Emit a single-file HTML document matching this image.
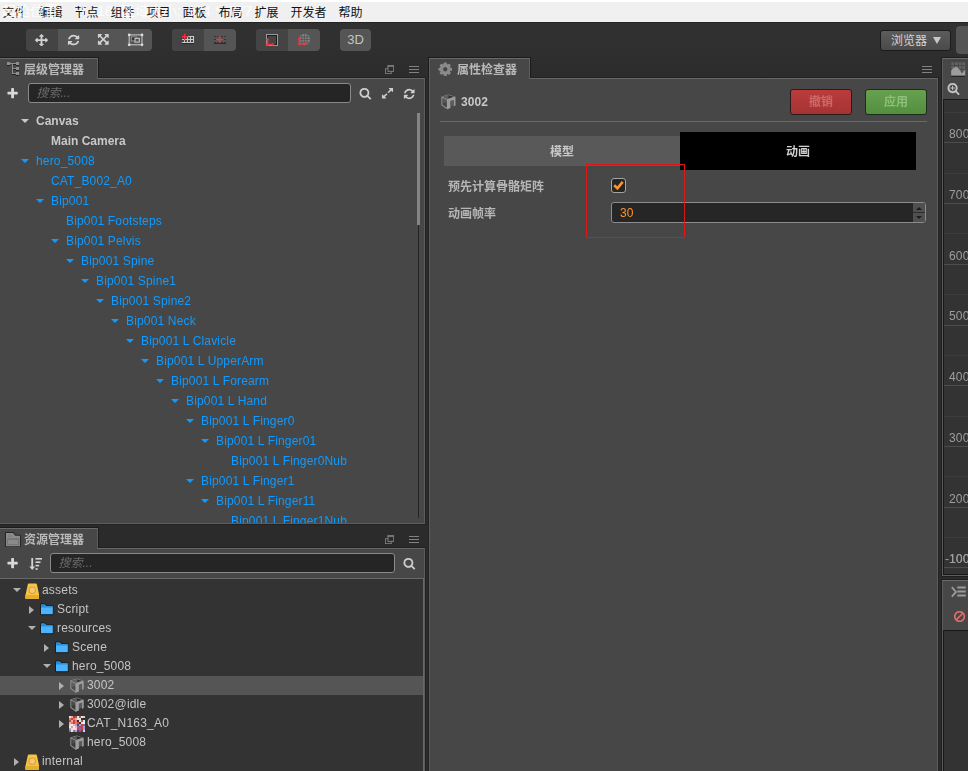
<!DOCTYPE html>
<html lang="zh-CN">
<head>
<meta charset="utf-8">
<title>Cocos Creator</title>
<style>
*{box-sizing:border-box;margin:0;padding:0}
html,body{width:968px;height:771px;overflow:hidden;background:#2b2b2b}
body{position:relative;font-family:"Liberation Sans","Noto Sans CJK SC",sans-serif;font-size:12px;color:#bdbdbd}
.abs{position:absolute}
.gs{will-change:transform}
#topwhite{left:0;top:0;width:968px;height:2px;background:#fff}
#menubar{left:0;top:2px;width:968px;height:20px;background:#f0f0f0;color:#111;font-size:12px;line-height:20px;white-space:nowrap}
#menubar span{position:absolute;top:1px}
#ghost{left:0;top:1px;color:#fff;font-size:14px;line-height:20px;white-space:nowrap;opacity:.92}
#ghost span{position:absolute;top:0}
#toolbar{left:0;top:22px;width:968px;height:57px;background:linear-gradient(#313131,#2c2c2c);box-shadow:inset 0 1px 0 #232323}
.grp{position:absolute;top:7px;height:22px;border-radius:4px;overflow:hidden;background:#555}
.grp i{position:absolute;top:0;height:22px;display:block}
.grp i.on{background:#444}
.tab{position:absolute;z-index:3;height:21px;box-shadow:0 -1px 0 #1c1c1c,1px -1px 0 #1c1c1c,-1px -1px 0 #1c1c1c;background:#474747;border:1px solid #5e5e5e;border-top-color:#6a6a6a;border-bottom:none;border-radius:0;color:#b9b9b9;font-weight:bold;font-size:12px;line-height:23px;white-space:nowrap}
.tabsh{position:absolute;background:#1c1c1c}
.panel{position:absolute;background:#474747;border:1px solid #5c5c5c;border-top-color:#676767;box-shadow:0 0 0 1px #222}
.search{position:absolute;height:20px;background:#252525;border:1px solid #8a8a8a;border-radius:3px;color:#6a6a6a;font-style:italic;font-size:12px;line-height:18px;padding-left:7.500px}
.tree div{position:absolute;white-space:nowrap;font-size:12px;line-height:20px;height:20px}
.h{color:#0f9bff;letter-spacing:.16px}
.g{color:#c8c8c8;font-weight:bold}
.tri{position:absolute;width:0;height:0;border-left:4px solid transparent;border-right:4px solid transparent;border-top:4.700px solid #0f9bff}
.trg{border-top-color:#c8c8c8}
.trr{position:absolute;width:0;height:0;border-top:4.200px solid transparent;border-bottom:4.200px solid transparent;border-left:5.400px solid #b0b0b0}
.trd{position:absolute;width:0;height:0;border-left:4px solid transparent;border-right:4px solid transparent;border-top:4.800px solid #b0b0b0}
#atree div.a{position:absolute;white-space:nowrap;font-size:12px;line-height:19px;height:19px;color:#c4c4c4;letter-spacing:.2px}
.sel{position:absolute;background:#555}
.sl{color:#9e9e9e;font-size:12px;line-height:14px;white-space:nowrap;letter-spacing:.2px}
.btn{border-radius:3px;text-align:center;font-weight:bold;line-height:24px;font-size:12px}
.lbl{font-weight:bold;color:#b6b6b6;line-height:20px;white-space:nowrap}
</style>
</head>
<body>

<svg width="0" height="0" style="position:absolute">
<defs>
<symbol id="i-db" viewBox="0 0 15 17" preserveAspectRatio="none">
  <path d="M3.900 .4h7.200c.5 0 .9.300 1 .8l2.500 11.500c.1.400.1.700.1 1.100v1.400c0 .8-.6 1.400-1.400 1.400H1.700c-.8 0-1.400-.6-1.400-1.400v-1.400c0-.4 0-.7.100-1.100L2.900 1.200c.1-.5.500-.8 1-.8z" fill="#f6c343"/>
  <path d="M.4 12.400h14.200c.1.400.1.700.1 1.100v1.700c0 .8-.6 1.400-1.400 1.400H1.700c-.8 0-1.400-.6-1.400-1.400v-1.700c0-.4 0-.7.100-1.100z" fill="#e6ae2f"/>
  <circle cx="7.400" cy="7.400" r="3.400" fill="#fcc76f" stroke="#c99b3f" stroke-width="1"/>
</symbol>
<symbol id="i-folder" viewBox="0 0 16 14" preserveAspectRatio="none">
  <path d="M1.500 1.200h4.500l1.700 1.900h6.800c.6 0 .9.300.9.900v7.900c0 .6-.3.900-.9.900H1.500c-.6 0-.9-.3-.9-.9V2.100c0-.6.300-.9.900-.9z" fill="#4db3ff" stroke="#181818" stroke-width="1.100"/>
  <path d="M1.200 1.800h4.600l1.700 1.900h7.300v1.200H1.200z" fill="#1f8fe3"/>
</symbol>
<symbol id="i-mesh" viewBox="0 0 15 16" preserveAspectRatio="none">
  <path d="M.3 2.700L7.200 .6l7.100 2.200v8.700l-1.500.8V6L9.400 6.900v6.900L6 15.300.3 11.200z M1.400 4L5.700 6v7.500L1.400 10.500z M2 2.800L7.200 1.250l5.400 1.600L6.300 4.900z" fill="#8d8d8d" fill-rule="evenodd"/>
  <path d="M1.400 4L5.700 6v7.500L1.400 10.500z" fill="rgba(118,118,118,.35)"/>
  <path d="M1.800 9.200L5.700 8.200v5.300L1.800 10.800z" fill="rgba(0,0,0,.22)"/>
  <path d="M2 2.800L7.200 1.250l5.400 1.600L6.300 4.900z" fill="rgba(30,30,30,.5)"/>
  <path d="M2 2.800L7.200 1.250l.5 3.100L6.300 4.900z" fill="rgba(140,140,140,.5)"/>
  <path d="M6 5.600L14.300 2.800v8.700l-1.500.7V6L9.400 6.900v6.900L6 15.300z" fill="#9c9c9c"/>
  <path d="M9.400 6.900l3.400-.9v5l-3.400 1.500z" fill="#5c5c5c"/>
</symbol>
</defs>
</svg>

<div id="topwhite" class="abs"></div>
<div id="menubar" class="abs"><span style="left:2.5px">文件</span><span style="left:38.5px">编辑</span><span style="left:74.5px">节点</span><span style="left:110.5px">组件</span><span style="left:146.5px">项目</span><span style="left:182.5px">面板</span><span style="left:218.5px">布局</span><span style="left:254.5px">扩展</span><span style="left:290.5px">开发者</span><span style="left:338.5px">帮助</span></div>
<div id="ghost" class="abs"><span style="left:2px">起始位置:</span><span style="left:79px">1,</span><span style="left:97px">18</span><span style="left:121px">区域大小:</span><span style="left:187.500px">974</span><span style="left:215px">*</span><span style="left:229px">777</span></div>

<div id="toolbar" class="abs">
<div class="grp" style="left:26px;width:126px"><i class="on" style="left:0;width:32px"></i></div>
<div class="grp" style="left:172px;width:64px"><i class="on" style="left:0;width:32px"></i></div>
<div class="grp" style="left:256px;width:64px"><i class="on" style="left:0;width:32px"></i></div>
<div class="grp" style="left:340px;width:31px;color:#c4c4c4;font-size:13px;line-height:21px;text-align:center">3D</div>
<svg class="abs" style="left:35.3px;top:11.700000000000003px" width="13" height="12.3" viewBox="0 0 1792 1792" preserveAspectRatio="none"><path d="M1792 896q0 26-19 45l-256 256q-19 19-45 19t-45-19-19-45v-128h-384v384h128q26 0 45 19t19 45-19 45l-256 256q-19 19-45 19t-45-19l-256-256q-19-19-19-45t19-45 45-19h128v-384h-384v128q0 26-19 45t-45 19-45-19l-256-256q-19-19-19-45t19-45l256-256q19-19 45-19t45 19 19 45v128h384v-384h-128q-26 0-45-19t-19-45 19-45l256-256q19-19 45-19t45 19l256 256q19 19 19 45t-19 45-45 19h-128v384h384v-128q0-26 19-45t45-19 45 19l256 256q19 19 19 45z" fill="#d2d2d2"/></svg>
<svg class="abs" style="left:66.8px;top:11.600000000000001px" width="13.2" height="12.2" viewBox="0 0 1792 1792" preserveAspectRatio="none"><path d="M1639 1056q0 5-1 7-64 268-268 434.500t-478 166.500q-146 0-282.500-55t-243.500-157l-129 129q-19 19-45 19t-45-19-19-45v-448q0-26 19-45t45-19h448q26 0 45 19t19 45-19 45l-137 137q71 66 161 102t187 36q134 0 250-65t186-179q11-17 53-117 8-23 30-23h192q13 0 22.500 9.500t9.500 22.500zm25-800v448q0 26-19 45t-45 19h-448q-26 0-45-19t-19-45 19-45l138-138q-148-137-349-137-134 0-250 65t-186 179q-11 17-53 117-8 23-30 23h-199q-13 0-22.500-9.500t-9.500-22.500v-7q65-268 270-434.500t480-166.500q146 0 284 55.500t245 156.500l130-129q19-19 45-19t45 19 19 45z" fill="#d2d2d2"/></svg>
<svg class="abs" style="left:97.3px;top:11.299999999999997px" width="12.6" height="12.6" viewBox="0 0 1792 1792" preserveAspectRatio="none"><path d="M1411 541l-355 355 355 355 144-144q29-31 70-14 39 17 39 59v448q0 26-19 45t-45 19h-448q-42 0-59-40-17-39 14-69l144-144-355-355-355 355 144 144q31 30 14 69-17 40-59 40h-448q-26 0-45-19t-19-45v-448q0-42 40-59 39-17 69 14l144 144 355-355-355-355-144 144q-19 19-45 19-12 0-24-5-40-17-40-59v-448q0-26 19-45t45-19h448q42 0 59 40 17 39-14 69l-144 144 355 355 355-355-144-144q-31-30-14-69 17-40 59-40h448q26 0 45 19t19 45v448q0 42-39 59-13 5-25 5-26 0-45-19z" fill="#d2d2d2"/></svg>
<svg class="abs" style="left:127px;top:11px" width="17" height="14" viewBox="0 0 17 14">
<rect x="2.200" y="1.900" width="12.800" height="9.900" fill="none" stroke="#cfcfcf" stroke-width="1"/>
<rect x="4.600" y="3.900" width="4.600" height="4" fill="#343434" stroke="#a9a9a9" stroke-width=".7"/>
<rect x="8" y="5.300" width="4.300" height="3.800" fill="#555" stroke="#dcdcdc" stroke-width=".9"/>
<circle cx="2.200" cy="1.900" r="1.400" fill="#dadada"/><circle cx="15" cy="1.900" r="1.400" fill="#dadada"/><circle cx="2.200" cy="11.800" r="1.400" fill="#dadada"/><circle cx="15" cy="11.800" r="1.400" fill="#dadada"/>
</svg>
<svg class="abs" style="left:180px;top:10px" width="16" height="14" viewBox="0 0 16 14">
<g stroke="#c9c9c9" stroke-width="1.100" fill="none"><path d="M2 4.500h12M2 7.500h12M2 10.500h12"/><path d="M4.500 4v7M7.500 4v7M10.500 4v7M13.500 4v7"/></g>
<path d="M2 11.600h12" stroke="#2a2a2a" stroke-width="1"/>
<path d="M2 4.600h6.200M4.600 1.700v6.500" stroke="#f3303f" stroke-width="1.400" fill="none"/>
</svg>
<svg class="abs" style="left:212px;top:10px" width="16" height="14" viewBox="0 0 16 14">
<g stroke="#333" stroke-width="1" fill="none" stroke-dasharray="2.200 1.200"><path d="M2 4.500h12M2 7.500h12M2 10.500h12"/></g>
<path d="M2 11.500h12" stroke="#2b2b2b" stroke-width="1"/>
<path d="M4 7.600h7M7.600 4v7" stroke="#f3303f" stroke-width="1.400" fill="none"/>
</svg>
<svg class="abs" style="left:264px;top:10px" width="16" height="16" viewBox="0 0 16 16">
<rect x="2.500" y="2.500" width="11" height="11" fill="none" stroke="#9a9a9a" stroke-width="1"/>
<rect x="3.500" y="3.500" width="9" height="9" fill="none" stroke="#1c1c1c" stroke-width="1"/>
<path d="M3.600 7.500v6.500M2 12.500h7" stroke="#f3303f" stroke-width="1.500" fill="none"/>
<path d="M1.600 8.200l2-2.400 2 2.400zM8.200 10.500l2.400 2-2.400 2z" fill="#f3303f"/>
</svg>
<svg class="abs" style="left:296px;top:10px" width="16" height="16" viewBox="0 0 16 16">
<circle cx="8.500" cy="7.500" r="5.700" fill="#868686"/>
<g stroke="#555" stroke-width=".9" fill="none"><path d="M3 5h11M2.500 7.600h12M3 10.200h11M5.800 2v11M8.400 1.800v11.600M11 2v11"/></g>
<path d="M3.300 6.800v7M2 11.900h7" stroke="#f3303f" stroke-width="1.500" fill="none"/>
<path d="M1.300 7.500l2-2.400 2 2.400zM8 9.900l2.400 2-2.400 2z" fill="#f3303f"/>
</svg>
<div class="abs" style="left:880px;top:8px;width:71px;height:21px;border:1px solid #1b1b1b;border-radius:3px;background:linear-gradient(#5c5c5c,#4a4a4a);color:#d4d4d4;font-size:12px;line-height:20px;padding-left:10px">浏览器<b class="abs" style="left:52px;top:6px;width:0;height:0;border-left:4.500px solid transparent;border-right:4.500px solid transparent;border-top:7px solid #c8c8c8"></b></div>
<div class="abs" style="left:956px;top:4px;width:30px;height:28px;background:#555;border-radius:4px"></div>
</div>


<div class="tab gs" style="left:-1px;top:58px;width:99px"><svg class="abs" style="left:7px;top:3px" width="12" height="14" viewBox="0 0 12 14" shape-rendering="crispEdges">
<g fill="#8e8e8e"><rect x="0" y="0" width="3" height="3"/><rect x="3" y="1" width="6" height="1"/><rect x="9" y="0" width="3" height="3"/>
<rect x="5" y="1" width="1" height="11"/><rect x="6" y="6" width="3" height="1"/><rect x="9" y="5" width="3" height="3"/>
<rect x="5" y="11" width="4" height="1"/><rect x="9" y="10" width="3" height="3"/></g>
<g fill="#222"><rect x="0" y="3" width="3" height="1"/><rect x="9" y="3" width="3" height="1"/><rect x="6" y="2" width="3" height="1"/><rect x="9" y="8" width="3" height="1"/><rect x="6" y="7" width="3" height="1"/><rect x="9" y="13" width="3" height="1"/><rect x="5" y="12" width="4" height="1"/></g>
</svg><span style="position:absolute;left:24px;top:0">层级管理器</span></div>
<svg class="abs" style="left:385px;top:65px" width="9.300" height="9.300" viewBox="0 0 9.300 9.300"><rect x=".5" y="3.700" width="5.800" height="4.900" fill="none" stroke="#767676" stroke-width="1"/><rect x="3" y=".8" width="5.700" height="5.600" fill="#2c2c2c" stroke="#7e7e7e" stroke-width="1"/><rect x="2.500" y=".3" width="6.700" height="1.500" fill="#7e7e7e"/></svg><svg class="abs" style="left:409px;top:66px" width="10" height="8" viewBox="0 0 10 8"><path d="M0 .5h10M0 3.500h10M0 6.500h10" stroke="#828282" stroke-width="1"/></svg>
<div class="panel gs" id="hier" style="left:-1px;top:78px;width:426px;height:446px;overflow:hidden">
  <div class="search" style="left:28px;top:4px;width:323px">搜索...</div><svg class="abs" style="left:6.4px;top:8.099999999999994px" width="13.2" height="13.2" viewBox="0 0 1792 1792" preserveAspectRatio="none"><path d="M1600 736v192q0 40-28 68t-68 28h-416v416q0 40-28 68t-68 28h-192q-40 0-68-28t-28-68v-416h-416q-40 0-68-28t-28-68v-192q0-40 28-68t68-28h416v-416q0-40 28-68t68-28h192q40 0 68 28t28 68v416h416q40 0 68 28t28 68z" fill="#d8d8d8"/></svg><svg class="abs" style="left:359.25px;top:8.200000000000003px" width="12.6" height="12.6" viewBox="0 0 1792 1792" preserveAspectRatio="none"><path d="M1216 832q0-185-131.500-316.500t-316.500-131.500-316.500 131.500-131.500 316.500 131.500 316.500 316.500 131.500 316.500-131.500 131.500-316.500zm512 832q0 52-38 90t-90 38q-54 0-90-38l-343-342q-179 124-399 124-143 0-273.500-55.500t-225-150-150-225-55.500-273.500 55.500-273.500 150-225 225-150 273.500-55.500 273.500 55.500 225 150 150 225 55.500 273.500q0 220-124 399l343 343q37 37 37 90z" fill="#cdcdcd"/></svg><svg class="abs" style="left:380.9px;top:8.099999999999994px" width="13" height="12.5" viewBox="0 0 1792 1792" preserveAspectRatio="none"><path d="M883 1056q0 13-10 23l-332 332 144 144q19 19 19 45t-19 45-45 19h-448q-26 0-45-19t-19-45v-448q0-26 19-45t45-19 45 19l144 144 332-332q10-10 23-10t23 10l114 114q10 10 10 23zm781-864v448q0 26-19 45t-45 19-45-19l-144-144-332 332q-10 10-23 10t-23-10l-114-114q-10-10-10-23t10-23l332-332-144-144q-19-19-19-45t19-45 45-19h448q26 0 45 19t19 45z" fill="#cdcdcd"/></svg><svg class="abs" style="left:402.8px;top:8.900000000000006px" width="12.5" height="12" viewBox="0 0 1792 1792" preserveAspectRatio="none"><path d="M1639 1056q0 5-1 7-64 268-268 434.500t-478 166.500q-146 0-282.500-55t-243.500-157l-129 129q-19 19-45 19t-45-19-19-45v-448q0-26 19-45t45-19h448q26 0 45 19t19 45-19 45l-137 137q71 66 161 102t187 36q134 0 250-65t186-179q11-17 53-117 8-23 30-23h192q13 0 22.500 9.500t9.500 22.500zm25-800v448q0 26-19 45t-45 19h-448q-26 0-45-19t-19-45 19-45l138-138q-148-137-349-137-134 0-250 65t-186 179q-11 17-53 117-8 23-30 23h-199q-13 0-22.500-9.500t-9.500-22.500v-7q65-268 270-434.500t480-166.500q146 0 284 55.500t245 156.500l130-129q19-19 45-19t45 19 19 45z" fill="#cdcdcd"/></svg>
  <div class="tree abs" style="left:0;top:0"><b class="tri trg" style="left:21.4px;top:39.8px"></b>
<div class="g" style="left:36px;top:32px">Canvas</div>
<div class="g" style="left:51px;top:52px">Main Camera</div>
<b class="tri" style="left:21.4px;top:79.8px"></b>
<div class="h" style="left:36px;top:72px">hero_5008</div>
<div class="h" style="left:51px;top:92px">CAT_B002_A0</div>
<b class="tri" style="left:36.4px;top:119.8px"></b>
<div class="h" style="left:51px;top:112px">Bip001</div>
<div class="h" style="left:66px;top:132px">Bip001 Footsteps</div>
<b class="tri" style="left:51.4px;top:159.8px"></b>
<div class="h" style="left:66px;top:152px">Bip001 Pelvis</div>
<b class="tri" style="left:66.4px;top:179.8px"></b>
<div class="h" style="left:81px;top:172px">Bip001 Spine</div>
<b class="tri" style="left:81.4px;top:199.8px"></b>
<div class="h" style="left:96px;top:192px">Bip001 Spine1</div>
<b class="tri" style="left:96.4px;top:219.8px"></b>
<div class="h" style="left:111px;top:212px">Bip001 Spine2</div>
<b class="tri" style="left:111.4px;top:239.8px"></b>
<div class="h" style="left:126px;top:232px">Bip001 Neck</div>
<b class="tri" style="left:126.4px;top:259.8px"></b>
<div class="h" style="left:141px;top:252px">Bip001 L Clavicle</div>
<b class="tri" style="left:141.4px;top:279.8px"></b>
<div class="h" style="left:156px;top:272px">Bip001 L UpperArm</div>
<b class="tri" style="left:156.4px;top:299.8px"></b>
<div class="h" style="left:171px;top:292px">Bip001 L Forearm</div>
<b class="tri" style="left:171.4px;top:319.8px"></b>
<div class="h" style="left:186px;top:312px">Bip001 L Hand</div>
<b class="tri" style="left:186.4px;top:339.8px"></b>
<div class="h" style="left:201px;top:332px">Bip001 L Finger0</div>
<b class="tri" style="left:201.4px;top:359.8px"></b>
<div class="h" style="left:216px;top:352px">Bip001 L Finger01</div>
<div class="h" style="left:231px;top:372px">Bip001 L Finger0Nub</div>
<b class="tri" style="left:186.4px;top:399.8px"></b>
<div class="h" style="left:201px;top:392px">Bip001 L Finger1</div>
<b class="tri" style="left:201.4px;top:419.8px"></b>
<div class="h" style="left:216px;top:412px">Bip001 L Finger11</div>
<div class="h" style="left:231px;top:432px">Bip001 L Finger1Nub</div></div>
  <div class="abs" style="left:418px;top:34px;width:1px;height:405px;background:#232323"></div><div class="abs" style="left:417px;top:34px;width:3px;height:112px;background:#858585"></div>
</div>


<div class="tab gs" style="left:-1px;top:528px;width:99px"><svg class="abs" style="left:5px;top:2.850px" width="16" height="15.200" viewBox="0 0 16 15.200">
<path d="M1 1h7.100l2 2.850H15v10.300H1z" fill="#8b8b8b" stroke="#262626" stroke-width="2" stroke-linejoin="round"/>
<path d="M1 1h7.100l2 2.850H15v10.300H1z" fill="#8b8b8b"/>
<rect x="1.900" y="6.100" width="12.400" height="7.100" fill="#777"/><rect x="3" y="8.100" width="9.800" height="3.900" fill="#8b8b8b"/><rect x="3.100" y="3.400" width="3.300" height="1.300" fill="#777"/>
</svg><span style="position:absolute;left:24px;top:0">资源管理器</span></div>
<svg class="abs" style="left:385px;top:535px" width="9.300" height="9.300" viewBox="0 0 9.300 9.300"><rect x=".5" y="3.700" width="5.800" height="4.900" fill="none" stroke="#767676" stroke-width="1"/><rect x="3" y=".8" width="5.700" height="5.600" fill="#2c2c2c" stroke="#7e7e7e" stroke-width="1"/><rect x="2.500" y=".3" width="6.700" height="1.500" fill="#7e7e7e"/></svg><svg class="abs" style="left:409px;top:536px" width="10" height="8" viewBox="0 0 10 8"><path d="M0 .5h10M0 3.500h10M0 6.500h10" stroke="#828282" stroke-width="1"/></svg>
<div class="panel gs" id="assets" style="left:-1px;top:548px;width:426px;height:230px;overflow:hidden">
  <div class="search" style="left:50px;top:4px;width:345px">搜索...</div><svg class="abs" style="left:6.4px;top:8.100000000000023px" width="13.2" height="13.2" viewBox="0 0 1792 1792" preserveAspectRatio="none"><path d="M1600 736v192q0 40-28 68t-68 28h-416v416q0 40-28 68t-68 28h-192q-40 0-68-28t-28-68v-416h-416q-40 0-68-28t-28-68v-192q0-40 28-68t68-28h416v-416q0-40 28-68t68-28h192q40 0 68 28t28 68v416h416q40 0 68 28t28 68z" fill="#d8d8d8"/></svg><svg class="abs" style="left:28.600px;top:8px" width="14" height="14" viewBox="0 0 14 14">
<path d="M2.300 1h1.800v8.500h2L3.200 13 .3 9.500h2z" fill="#d4d4d4"/>
<g fill="#d4d4d4"><rect x="6.500" y="1" width="6.500" height="1.600"/><rect x="6.500" y="4.400" width="5" height="1.600"/><rect x="6.500" y="7.800" width="3.600" height="1.600"/><rect x="6.500" y="11.200" width="2.200" height="1.600"/></g></svg><svg class="abs" style="left:403.3px;top:8.399999999999977px" width="12.6" height="12.6" viewBox="0 0 1792 1792" preserveAspectRatio="none"><path d="M1216 832q0-185-131.500-316.500t-316.500-131.500-316.500 131.500-131.500 316.500 131.500 316.500 316.500 131.500 316.500-131.500 131.500-316.500zm512 832q0 52-38 90t-90 38q-54 0-90-38l-343-342q-179 124-399 124-143 0-273.500-55.500t-225-150-150-225-55.500-273.500 55.500-273.500 150-225 225-150 273.500-55.500 273.500 55.500 225 150 150 225 55.500 273.500q0 220-124 399l343 343q37 37 37 90z" fill="#cdcdcd"/></svg>
  <div class="abs" id="atree" style="left:0;top:29px;width:424px;height:200px;background:#333;border-top:1px solid #686868;border-right:1px solid #686868"><b class="trd" style="left:12.7px;top:9.4px"></b>
<svg class="abs" style="left:24.6px;top:3.7px" width="14.700" height="16.600"><use href="#i-db"/></svg>
<div class="a" style="left:42px;top:2px">assets</div>
<b class="trr" style="left:28.9px;top:27.2px"></b>
<svg class="abs" style="left:40.15px;top:24.4px" width="13.800" height="12.900"><use href="#i-folder"/></svg>
<div class="a" style="left:57px;top:21px">Script</div>
<b class="trd" style="left:27.7px;top:47.4px"></b>
<svg class="abs" style="left:40.15px;top:43.4px" width="13.800" height="12.900"><use href="#i-folder"/></svg>
<div class="a" style="left:57px;top:40px">resources</div>
<b class="trr" style="left:43.9px;top:65.2px"></b>
<svg class="abs" style="left:55.15px;top:62.4px" width="13.800" height="12.900"><use href="#i-folder"/></svg>
<div class="a" style="left:72px;top:59px">Scene</div>
<b class="trd" style="left:42.7px;top:85.4px"></b>
<svg class="abs" style="left:55.15px;top:81.4px" width="13.800" height="12.900"><use href="#i-folder"/></svg>
<div class="a" style="left:72px;top:78px">hero_5008</div>
<div class="sel" style="left:0;top:97px;width:423px;height:19px"></div>
<b class="trr" style="left:58.9px;top:103.2px"></b>
<svg class="abs" style="left:70.3px;top:99px" width="14.200" height="15.400"><use href="#i-mesh"/></svg>
<div class="a" style="left:87px;top:97px">3002</div>
<b class="trr" style="left:58.9px;top:122.2px"></b>
<svg class="abs" style="left:70.3px;top:118px" width="14.200" height="15.400"><use href="#i-mesh"/></svg>
<div class="a" style="left:87px;top:116px">3002@idle</div>
<b class="trr" style="left:58.9px;top:141.2px"></b>
<svg class="abs" style="left:69px;top:137.4px" width="16" height="16" viewBox="0 0 16 16"><rect x="0" y="0" width="2" height="2" fill="#f3dcd6"/><rect x="2" y="0" width="2" height="2" fill="#e7a9a0"/><rect x="4" y="0" width="2" height="2" fill="#b5382f"/><rect x="6" y="0" width="2" height="2" fill="#c9453f"/><rect x="8" y="0" width="2" height="2" fill="#d6ebe0"/><rect x="10" y="0" width="2" height="2" fill="#c9504a"/><rect x="12" y="0" width="2" height="2" fill="#d6ebe0"/><rect x="14" y="0" width="2" height="2" fill="#b9d9c8"/><rect x="0" y="2" width="2" height="2" fill="#dd7a70"/><rect x="2" y="2" width="2" height="2" fill="#c9453f"/><rect x="4" y="2" width="2" height="2" fill="#dd7a70"/><rect x="6" y="2" width="2" height="2" fill="#e7a9a0"/><rect x="8" y="2" width="2" height="2" fill="#d6ebe0"/><rect x="10" y="2" width="2" height="2" fill="#d6ebe0"/><rect x="12" y="2" width="2" height="2" fill="#3a2a33"/><rect x="14" y="2" width="2" height="2" fill="#3a2a33"/><rect x="0" y="4" width="2" height="2" fill="#c9453f"/><rect x="2" y="4" width="2" height="2" fill="#e7a9a0"/><rect x="4" y="4" width="2" height="2" fill="#c9453f"/><rect x="6" y="4" width="2" height="2" fill="#dd7a70"/><rect x="8" y="4" width="2" height="2" fill="#3a2a33"/><rect x="10" y="4" width="2" height="2" fill="#d6ebe0"/><rect x="12" y="4" width="2" height="2" fill="#c9504a"/><rect x="14" y="4" width="2" height="2" fill="#d6ebe0"/><rect x="0" y="6" width="2" height="2" fill="#e7a9a0"/><rect x="2" y="6" width="2" height="2" fill="#dd7a70"/><rect x="4" y="6" width="2" height="2" fill="#c9453f"/><rect x="6" y="6" width="2" height="2" fill="#dd7a70"/><rect x="8" y="6" width="2" height="2" fill="#c9504a"/><rect x="10" y="6" width="2" height="2" fill="#3a2a33"/><rect x="12" y="6" width="2" height="2" fill="#d6ebe0"/><rect x="14" y="6" width="2" height="2" fill="#eef5f0"/><rect x="0" y="8" width="2" height="2" fill="#f0d2cb"/><rect x="2" y="8" width="2" height="2" fill="#f6e6e0"/><rect x="4" y="8" width="2" height="2" fill="#e8b9b0"/><rect x="6" y="8" width="2" height="2" fill="#c7a0c0"/><rect x="8" y="8" width="2" height="2" fill="#4a3f8a"/><rect x="10" y="8" width="2" height="2" fill="#a99ad8"/><rect x="12" y="8" width="2" height="2" fill="#c9453f"/><rect x="14" y="8" width="2" height="2" fill="#7a6cc0"/><rect x="0" y="10" width="2" height="2" fill="#f6e6e0"/><rect x="2" y="10" width="2" height="2" fill="#c7a0c0"/><rect x="4" y="10" width="2" height="2" fill="#f6e6e0"/><rect x="6" y="10" width="2" height="2" fill="#e8b9b0"/><rect x="8" y="10" width="2" height="2" fill="#7a6cc0"/><rect x="10" y="10" width="2" height="2" fill="#c9453f"/><rect x="12" y="10" width="2" height="2" fill="#c9453f"/><rect x="14" y="10" width="2" height="2" fill="#a99ad8"/><rect x="0" y="12" width="2" height="2" fill="#c7a0c0"/><rect x="2" y="12" width="2" height="2" fill="#f0d2cb"/><rect x="4" y="12" width="2" height="2" fill="#f6e6e0"/><rect x="6" y="12" width="2" height="2" fill="#f0d2cb"/><rect x="8" y="12" width="2" height="2" fill="#c9453f"/><rect x="10" y="12" width="2" height="2" fill="#7a6cc0"/><rect x="12" y="12" width="2" height="2" fill="#c9453f"/><rect x="14" y="12" width="2" height="2" fill="#a99ad8"/><rect x="0" y="14" width="2" height="2" fill="#8d6fae"/><rect x="2" y="14" width="2" height="2" fill="#f6e6e0"/><rect x="4" y="14" width="2" height="2" fill="#8d6fae"/><rect x="6" y="14" width="2" height="2" fill="#c7a0c0"/><rect x="8" y="14" width="2" height="2" fill="#4a3f8a"/><rect x="10" y="14" width="2" height="2" fill="#c9453f"/><rect x="12" y="14" width="2" height="2" fill="#4a3f8a"/><rect x="14" y="14" width="2" height="2" fill="#d9d0ee"/></svg>
<div class="a" style="left:87px;top:135px">CAT_N163_A0</div>
<svg class="abs" style="left:70.3px;top:156px" width="14.200" height="15.400"><use href="#i-mesh"/></svg>
<div class="a" style="left:87px;top:154px">hero_5008</div>
<b class="trr" style="left:13.9px;top:179.2px"></b>
<svg class="abs" style="left:24.6px;top:174.7px" width="14.700" height="16.600"><use href="#i-db"/></svg>
<div class="a" style="left:42px;top:173px">internal</div></div>
</div>


<div class="tab gs" style="left:429px;top:58px;width:101px"><svg class="abs" style="left:7.500px;top:2.800px" width="14.500" height="14.500" viewBox="-8 -8 16 16"><g fill="#8a8a8a"><rect x="-1.750" y="-7.500" width="3.500" height="3" rx="1" transform="rotate(0)"/><rect x="-1.750" y="-7.500" width="3.500" height="3" rx="1" transform="rotate(45)"/><rect x="-1.750" y="-7.500" width="3.500" height="3" rx="1" transform="rotate(90)"/><rect x="-1.750" y="-7.500" width="3.500" height="3" rx="1" transform="rotate(135)"/><rect x="-1.750" y="-7.500" width="3.500" height="3" rx="1" transform="rotate(180)"/><rect x="-1.750" y="-7.500" width="3.500" height="3" rx="1" transform="rotate(225)"/><rect x="-1.750" y="-7.500" width="3.500" height="3" rx="1" transform="rotate(270)"/><rect x="-1.750" y="-7.500" width="3.500" height="3" rx="1" transform="rotate(315)"/></g><circle r="4.200" fill="none" stroke="#8a8a8a" stroke-width="3.600"/></svg><span style="position:absolute;left:27px;top:0">属性检查器</span></div>
<svg class="abs" style="left:921.5px;top:66px" width="10" height="8" viewBox="0 0 10 8"><path d="M0 .5h10M0 3.500h10M0 6.500h10" stroke="#828282" stroke-width="1"/></svg>
<div class="panel gs" id="insp" style="left:429px;top:78px;width:509px;height:700px">
  <svg class="abs" style="left:10.500px;top:14.500px" width="15" height="16"><use href="#i-mesh"/></svg>
  <div class="abs" style="left:31px;top:13px;font-weight:bold;color:#c8c8c8;line-height:20px;letter-spacing:.1px">3002</div>
  <div class="abs btn" style="left:360px;top:10px;width:62px;height:26px;background:linear-gradient(#bb3c3c,#a53333);border:1px solid #2b1a1a;color:#cb6a69">撤销</div>
  <div class="abs btn" style="left:435px;top:10px;width:62px;height:26px;background:linear-gradient(#67a150,#528f3f);border:1px solid #1f2b1a;color:#8fbf7a">应用</div>
  <div class="abs" style="left:10px;top:42px;width:487px;height:1px;background:#686868"></div>
  <div class="abs" style="left:14px;top:57px;width:236px;height:30px;background:#595959;color:#c8c8c8;font-weight:bold;text-align:center;line-height:33px">模型</div>
  <div class="abs" style="left:250px;top:53px;width:236px;height:38px;background:#000;color:#d0d0d0;font-weight:bold;text-align:center;line-height:41px">动画</div>
  <div class="abs lbl" style="left:18px;top:98px">预先计算骨骼矩阵</div>
  <div class="abs" style="left:181px;top:99px;width:15px;height:15px;background:#262626;border:1px solid #a5a5a5;border-radius:3px">
    <svg class="abs" style="left:0;top:0" width="13" height="13" viewBox="0 0 13 13"><path d="M2.200 6.300l3.200 3 5.300-6.400" fill="none" stroke="#fd942b" stroke-width="2.600"/></svg>
  </div>
  <div class="abs lbl" style="left:18px;top:125px">动画帧率</div>
  <div class="abs" style="left:181px;top:123px;width:315px;height:21px;background:#262626;border:1px solid #8c8c8c;border-radius:3px;color:#fd942b;line-height:21px;padding-left:8px">30
    <div class="abs" style="right:0;top:0;width:12px;height:19px;background:#505050;border-radius:0 2px 2px 0"></div>
    <div class="abs" style="right:0;top:9px;width:12px;height:1px;background:#2e2e2e"></div>
    <b class="abs" style="right:3px;top:4px;width:0;height:0;border-left:3px solid transparent;border-right:3px solid transparent;border-bottom:3px solid #1c1c1c"></b>
    <b class="abs" style="right:3px;top:13px;width:0;height:0;border-left:3px solid transparent;border-right:3px solid transparent;border-top:3px solid #1c1c1c"></b>
  </div>
  <div class="abs" style="left:156px;top:85px;width:99px;height:74px;border:1px solid #dc1717"></div>
</div>


<div class="abs gs" style="left:942px;top:58px;width:40px;height:518px;background:#474747;border:1px solid #5c5c5c;border-top-color:#6a6a6a;border-radius:0;box-shadow:0 0 0 1px #1f1f1f">
<svg class="abs" style="left:8px;top:3px" width="15" height="15" viewBox="0 0 15 15">
<g fill="#626262"><rect x="0.3" y="0.3" width="2.800" height="2.800"/><rect x="4.0" y="0.3" width="2.800" height="2.800"/><rect x="7.7" y="0.3" width="2.800" height="2.800"/><rect x="11.4" y="0.3" width="2.800" height="2.800"/><rect x="0.3" y="4.0" width="2.800" height="2.800"/><rect x="4.0" y="4.0" width="2.800" height="2.800"/><rect x="7.7" y="4.0" width="2.800" height="2.800"/><rect x="11.4" y="4.0" width="2.800" height="2.800"/><rect x="0.3" y="7.7" width="2.800" height="2.800"/><rect x="4.0" y="7.7" width="2.800" height="2.800"/><rect x="7.7" y="7.7" width="2.800" height="2.800"/><rect x="11.4" y="7.7" width="2.800" height="2.800"/></g>
<path d="M.2 13.800V8.800C1.700 6.200 3.500 5 5 5c2.300 0 3.900 3.600 6 6.200l3.200-3.400v6z" fill="#9c9c9c"/><rect x=".2" y="13.800" width="14" height="1" fill="#1f1f1f"/></svg>
<svg class="abs" style="left:3.8px;top:23.1px" width="13" height="13" viewBox="0 0 1792 1792" preserveAspectRatio="none"><path d="M1088 800v64q0 13-9.500 22.500t-22.500 9.500h-224v224q0 13-9.500 22.500t-22.500 9.500h-64q-13 0-22.500-9.500t-9.500-22.500v-224h-224q-13 0-22.500-9.500t-9.500-22.500v-64q0-13 9.500-22.500t22.500-9.500h224v-224q0-13 9.500-22.500t22.500-9.500h64q13 0 22.500 9.500t9.500 22.500v224h224q13 0 22.500 9.500t9.500 22.500zm128 32q0-185-131.500-316.500t-316.500-131.500-316.500 131.500-131.500 316.500 131.500 316.500 316.500 131.500 316.500-131.500 131.500-316.500zm512 832q0 53-37.500 90.500t-90.500 37.500q-54 0-90-38l-343-342q-179 124-399 124-143 0-273.500-55.500t-225-150-150-225-55.500-273.500 55.500-273.500 150-225 225-150 273.500-55.500 273.500 55.500 225 150 150 225 55.500 273.500q0 220-124 399l343 343q37 37 37 90z" fill="#c4c4c4"/></svg>
<div class="abs" style="left:0;top:40px;width:40px;height:476px;background:#333;border:1px solid #181818;overflow:hidden">
<div class="abs" style="left:0;top:0"><div class="abs" style="left:0;top:12px;width:40px;height:1px;background:#3d3d3d"></div><div class="abs" style="left:0;top:42px;width:40px;height:1px;background:#4d4d4d"></div><div class="abs" style="left:0;top:73px;width:40px;height:1px;background:#3d3d3d"></div><div class="abs" style="left:0;top:103px;width:40px;height:1px;background:#4d4d4d"></div><div class="abs" style="left:0;top:133px;width:40px;height:1px;background:#3d3d3d"></div><div class="abs" style="left:0;top:164px;width:40px;height:1px;background:#4d4d4d"></div><div class="abs" style="left:0;top:194px;width:40px;height:1px;background:#3d3d3d"></div><div class="abs" style="left:0;top:225px;width:40px;height:1px;background:#4d4d4d"></div><div class="abs" style="left:0;top:255px;width:40px;height:1px;background:#3d3d3d"></div><div class="abs" style="left:0;top:285px;width:40px;height:1px;background:#4d4d4d"></div><div class="abs" style="left:0;top:316px;width:40px;height:1px;background:#3d3d3d"></div><div class="abs" style="left:0;top:346px;width:40px;height:1px;background:#4d4d4d"></div><div class="abs" style="left:0;top:376px;width:40px;height:1px;background:#3d3d3d"></div><div class="abs" style="left:0;top:407px;width:40px;height:1px;background:#4d4d4d"></div><div class="abs" style="left:0;top:437px;width:40px;height:1px;background:#3d3d3d"></div><div class="abs" style="left:0;top:467px;width:40px;height:1px;background:#4d4d4d"></div><div class="abs sl" style="left:5px;top:27px">800</div><div class="abs sl" style="left:5px;top:88px">700</div><div class="abs sl" style="left:5px;top:149px">600</div><div class="abs sl" style="left:5px;top:209px">500</div><div class="abs sl" style="left:5px;top:270px">400</div><div class="abs sl" style="left:5px;top:331px">300</div><div class="abs sl" style="left:5px;top:392px">200</div><div class="abs sl" style="left:5px;top:452px">100</div><div class="abs sl" style="left:1px;top:452px">-100</div></div>
</div>
</div>
<div class="abs gs" style="left:942px;top:580px;width:40px;height:200px;background:#474747;border:1px solid #5c5c5c;border-top-color:#6a6a6a;border-radius:0;box-shadow:0 0 0 1px #1f1f1f">
<svg class="abs" style="left:8px;top:5px" width="16" height="12" viewBox="0 0 16 12"><path d="M.8 1.200L5 5.900.8 10.600" fill="none" stroke="#9a9a9a" stroke-width="1.800"/><path d="M6.300 1.500h8.500M6.300 5.500h8.500M6.300 9.500h8.500" stroke="#9a9a9a" stroke-width="1.800"/></svg>
<svg class="abs" style="left:10.5px;top:29px" width="13" height="13" viewBox="0 0 1792 1792" preserveAspectRatio="none"><path d="M1312 893q0-161-87-295l-754 753q137 89 297 89 111 0 211.500-43.500t173.500-116.500 116-174.500 43-212.500zm-999 299l755-754q-135-91-300-91-148 0-273 73t-198 199-73 274q0 162 89 299zm1223-299q0 157-61 300t-163.500 246-245 164-298.500 61-298.500-61-245-164-163.500-246-61-300 61-299.500 163.500-245.500 245-164 298.500-61 298.500 61 245 164 163.500 245.500 61 299.500z" fill="#e26d6d"/></svg>
<div class="abs" style="left:0;top:49px;width:40px;height:160px;background:#333;border:1px solid #181818"></div>
</div>

</body>
</html>
